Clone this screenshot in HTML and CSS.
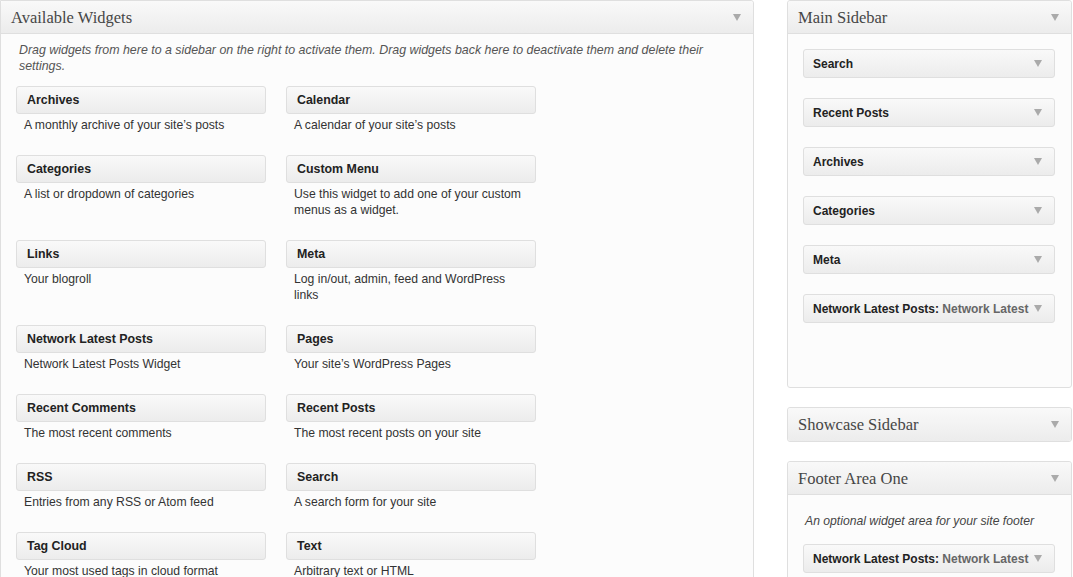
FILE: index.html
```html
<!DOCTYPE html>
<html>
<head>
<meta charset="utf-8">
<link rel="stylesheet" href="styles.css">
</head>
<body>
<div class="page">
  <section class="panel available">
    <div class="panel-head"><h3>Available Widgets</h3><span class="arrow"></span></div>
    <div class="panel-body">
      <p class="intro">Drag widgets from here to a sidebar on the right to activate them. Drag widgets back here to deactivate them and delete their settings.</p>
      <div class="widget-grid">
        <div class="widget"><div class="w-title">Archives</div><div class="w-desc">A monthly archive of your site’s posts</div></div>
        <div class="widget"><div class="w-title">Calendar</div><div class="w-desc">A calendar of your site’s posts</div></div>
        <div class="widget"><div class="w-title">Categories</div><div class="w-desc">A list or dropdown of categories</div></div>
        <div class="widget"><div class="w-title">Custom Menu</div><div class="w-desc">Use this widget to add one of your custom menus as a widget.</div></div>
        <div class="widget"><div class="w-title">Links</div><div class="w-desc">Your blogroll</div></div>
        <div class="widget"><div class="w-title">Meta</div><div class="w-desc">Log in/out, admin, feed and WordPress links</div></div>
        <div class="widget"><div class="w-title">Network Latest Posts</div><div class="w-desc">Network Latest Posts Widget</div></div>
        <div class="widget"><div class="w-title">Pages</div><div class="w-desc">Your site’s WordPress Pages</div></div>
        <div class="widget"><div class="w-title">Recent Comments</div><div class="w-desc">The most recent comments</div></div>
        <div class="widget"><div class="w-title">Recent Posts</div><div class="w-desc">The most recent posts on your site</div></div>
        <div class="widget"><div class="w-title">RSS</div><div class="w-desc">Entries from any RSS or Atom feed</div></div>
        <div class="widget"><div class="w-title">Search</div><div class="w-desc">A search form for your site</div></div>
        <div class="widget"><div class="w-title">Tag Cloud</div><div class="w-desc">Your most used tags in cloud format</div></div>
        <div class="widget"><div class="w-title">Text</div><div class="w-desc">Arbitrary text or HTML</div></div>
      </div>
    </div>
  </section>

  <div class="sidebars">
    <section class="panel sidebar main-sidebar">
      <div class="panel-head"><h3>Main Sidebar</h3><span class="arrow"></span></div>
      <div class="panel-body side-body">
        <div class="s-widget"><span class="s-title">Search</span><span class="arrow"></span></div>
        <div class="s-widget"><span class="s-title">Recent Posts</span><span class="arrow"></span></div>
        <div class="s-widget"><span class="s-title">Archives</span><span class="arrow"></span></div>
        <div class="s-widget"><span class="s-title">Categories</span><span class="arrow"></span></div>
        <div class="s-widget"><span class="s-title">Meta</span><span class="arrow"></span></div>
        <div class="s-widget"><span class="s-title">Network Latest Posts:<span class="in-title"> Network Latest</span></span><span class="arrow"></span></div>
      </div>
    </section>

    <section class="panel sidebar closed">
      <div class="panel-head"><h3>Showcase Sidebar</h3><span class="arrow"></span></div>
    </section>

    <section class="panel sidebar">
      <div class="panel-head"><h3>Footer Area One</h3><span class="arrow"></span></div>
      <div class="panel-body side-body footer-body">
        <p class="side-desc">An optional widget area for your site footer</p>
        <div class="s-widget"><span class="s-title">Network Latest Posts:<span class="in-title"> Network Latest</span></span><span class="arrow"></span></div>
      </div>
    </section>
  </div>
</div>
</body>
</html>
```

FILE: styles.css
```css
* { box-sizing: border-box; }
html, body { margin: 0; padding: 0; background: #fff; }
body {
  font-family: "Liberation Sans", Arial, sans-serif;
  color: #333;
  overflow: hidden;
  height: 577px;
}
.page {
  display: flex;
  align-items: flex-start;
  gap: 33px;
}
.panel {
  border: 1px solid #dfdfdf;
  border-radius: 3px;
  background: #fcfcfc;
}
.available {
  width: 754px;
  flex: none;
  border-top-left-radius: 0;
  min-height: 620px;
}
.sidebars {
  width: 285px;
  flex: none;
  display: flex;
  flex-direction: column;
  gap: 19px;
}
.panel-head {
  height: 33px;
  display: flex;
  align-items: center;
  justify-content: space-between;
  padding: 0 12px 0 10px;
  background: linear-gradient(to bottom, #f9f9f9, #ececec);
  border-bottom: 1px solid #dfdfdf;
  border-radius: 3px 3px 0 0;
}
.closed .panel-head {
  border-bottom: none;
  border-radius: 3px;
}
.panel-head h3 {
  margin: 0;
  font-family: "Liberation Serif", "Times New Roman", serif;
  font-weight: normal;
  font-size: 16.5px;
  color: #464646;
  padding-top: 1px;
}
.arrow {
  width: 0;
  height: 0;
  border-left: 4px solid transparent;
  border-right: 4px solid transparent;
  border-top: 7px solid #aaa;
  flex: none;
}
.panel-body { padding: 0 15px; }
.intro {
  margin: 0;
  padding: 8px 18px 0 3px;
  font-size: 12.4px;
  line-height: 16px;
  font-style: italic;
  color: #555;
}
.widget-grid {
  display: grid;
  grid-template-columns: 250px 250px;
  column-gap: 20px;
  margin-top: 12px;
  align-items: start;
}
.widget { margin-bottom: 22px; }
.w-title {
  height: 28px;
  border: 1px solid #dfdfdf;
  border-radius: 3px;
  background: linear-gradient(to bottom, #f9f9f9, #ececec);
  font-weight: bold;
  font-size: 12.4px;
  line-height: 26px;
  padding-left: 10px;
  color: #222;
}
.w-desc {
  margin-top: 3px;
  padding: 0 8px;
  font-size: 12.2px;
  line-height: 16px;
  color: #333;
}
.side-body { padding: 15px 16px 0 15px; }
.main-sidebar .side-body { padding-bottom: 44px; }
.s-widget {
  height: 29px;
  border: 1px solid #dfdfdf;
  border-radius: 3px;
  background: linear-gradient(to bottom, #f9f9f9, #ececec);
  display: flex;
  align-items: center;
  padding: 0 12px 0 9px;
  margin-bottom: 20px;
  gap: 6px;
}
.s-title {
  flex: 1;
  min-width: 0;
  white-space: nowrap;
  font-weight: bold;
  font-size: 12px;
  color: #222;
}
.in-title { color: #666; }
.footer-body { padding-top: 0; }
.side-desc {
  margin: 0;
  padding: 18px 0 15px 2px;
  font-size: 12.2px;
  line-height: 16px;
  font-style: italic;
  color: #444;
}
```
